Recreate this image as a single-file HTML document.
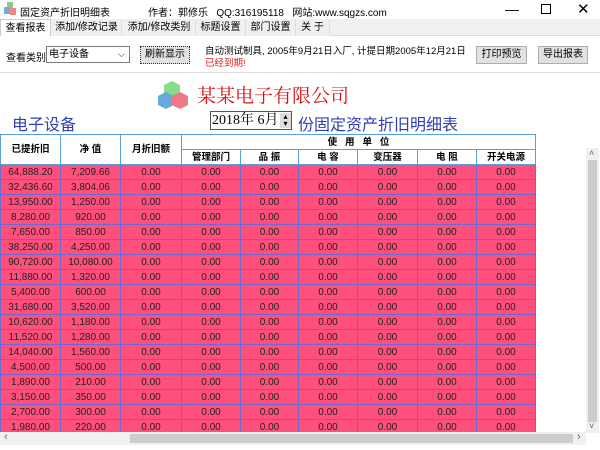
<!DOCTYPE html>
<html><head><meta charset="utf-8"><style>
*{margin:0;padding:0;box-sizing:border-box}
body{width:600px;height:450px;overflow:hidden;background:#fff;font-family:"Liberation Sans","Noto Sans CJK SC",sans-serif;font-size:10px;color:#000;position:relative}
.a{position:absolute;white-space:nowrap}
.tab{position:absolute;top:19px;height:17px;line-height:17px;text-align:center;background:#f0f0f0;border-right:1px solid #ddd;white-space:nowrap;overflow:hidden;font-size:10px}
.btn{position:absolute;height:18px;line-height:16px;text-align:center;background:#e1e1e1;border:1px solid #adadad;font-size:10px}
#grid{position:absolute;left:0;top:134px;width:586px;height:298px;overflow:hidden}
table{border-collapse:collapse;table-layout:fixed;width:535px}
td{border:1px solid #6a6ad0;text-align:center;height:15px;line-height:13px;font-size:10px;padding:0;white-space:nowrap;overflow:hidden}
thead td{background:#fff;border-color:#5aa0d8;font-weight:bold;font-size:9.5px}
tbody td{background:#ff4f7c;color:#222}
</style></head><body>
<svg class="a" style="left:3px;top:2px" width="14" height="14" viewBox="0 0 14 14"><rect x="4" y="0" width="6" height="6" fill="#8c8"/><rect x="1" y="5" width="6" height="7" fill="#7ad"/><rect x="7" y="6" width="6" height="7" fill="#e88"/></svg>
<div class="a" style="left:20px;top:4px">固定资产折旧明细表</div>
<div class="a" style="left:148px;top:4px">作者：郭修乐&nbsp;&nbsp; QQ:316195118&nbsp;&nbsp; 网站:www.sqgzs.com</div>
<div class="a" style="left:505px;top:1px;font-size:14px">—</div>
<div class="a" style="left:541px;top:4px;width:10px;height:10px;border:1px solid #000"></div>
<div class="a" style="left:577px;top:0px;font-size:15px">✕</div>
<div class="a" style="left:0;top:19px;width:600px;height:17px;background:#f0f0f0;border-bottom:1px solid #ddd"></div>
<div class="tab" style="left:0;width:51px;background:#fff;border:1px solid #ccc;border-bottom:none">查看报表</div>
<div class="tab" style="left:52px;width:70px">添加/修改记录</div>
<div class="tab" style="left:123px;width:73px">添加/修改类别</div>
<div class="tab" style="left:196px;width:50px">标题设置</div>
<div class="tab" style="left:246px;width:50px">部门设置</div>
<div class="tab" style="left:296px;width:34px">关 于</div>
<div class="a" style="left:6px;top:49px">查看类别</div>
<div class="a" style="left:46px;top:46px;width:84px;height:17px;border:1px solid #7a7a7a;padding-left:2px;line-height:15px">电子设备<span style="position:absolute;right:4px;font-size:9px">⌵</span></div>
<div class="btn" style="left:140px;top:46px;width:50px;border:1px dotted #333">刷新显示</div>
<div class="a" style="left:205px;top:43px;font-size:9.5px">自动测试制具, 2005年9月21日入厂, 计提日期2005年12月21日</div>
<div class="a" style="left:205px;top:55px;font-size:9.5px;color:#e02020">已经到期!</div>
<div class="btn" style="left:476px;top:46px;width:51px">打印预览</div>
<div class="btn" style="left:538px;top:46px;width:50px">导出报表</div>
<div class="a" style="left:0;top:72px;width:600px;border-top:1px solid #ddd"></div>
<svg class="a" style="left:158px;top:79px" width="32" height="32" viewBox="0 0 32 32"><polygon points="14,2 22,6 22,15 14,19 6,15 6,6" fill="#8d8"/><polygon points="8,13 16,17 16,26 8,30 0,26 0,17" fill="#6ad"/><polygon points="22,13 30,17 30,26 22,30 14,26 14,17" fill="#e78"/></svg>
<div class="a" style="left:197px;top:81px;font-size:19px;color:#e01010;font-family:'Liberation Serif','Noto Serif CJK SC',serif">某某电子有限公司</div>
<div class="a" style="left:12px;top:111px;font-size:16px;color:#3040b0">电子设备</div>
<div class="a" style="left:210px;top:111px;width:82px;height:19px;border:1px solid #555;font-size:14px;line-height:17px;padding-left:1px;font-family:'Liberation Serif','Noto Serif CJK SC',serif">2018年 6月<span style="position:absolute;right:0;top:1px;width:11px;height:15px;background:#ddd;font-size:8px;line-height:7px;text-align:center">▴<br>▾</span></div>
<div class="a" style="left:298px;top:111px;font-size:16px;color:#3040b0">份固定资产折旧明细表</div>
<div id="grid"><table>
<colgroup><col style="width:60px"><col style="width:60px"><col style="width:61px"><col style="width:59px"><col style="width:58px"><col style="width:59px"><col style="width:60px"><col style="width:59px"><col style="width:59px"></colgroup>
<thead><tr><td rowspan="2">已提折旧</td><td rowspan="2">净 值</td><td rowspan="2">月折旧额</td><td colspan="6">使 &nbsp; 用 &nbsp; 单 &nbsp; 位</td></tr>
<tr><td>管理部门</td><td>品 振</td><td>电 容</td><td>变压器</td><td>电 阻</td><td>开关电源</td></tr></thead>
<tbody>
<tr><td>64,888.20</td><td>7,209.66</td><td>0.00</td><td>0.00</td><td>0.00</td><td>0.00</td><td>0.00</td><td>0.00</td><td>0.00</td></tr>
<tr><td>32,436.60</td><td>3,804.06</td><td>0.00</td><td>0.00</td><td>0.00</td><td>0.00</td><td>0.00</td><td>0.00</td><td>0.00</td></tr>
<tr><td>13,950.00</td><td>1,250.00</td><td>0.00</td><td>0.00</td><td>0.00</td><td>0.00</td><td>0.00</td><td>0.00</td><td>0.00</td></tr>
<tr><td>8,280.00</td><td>920.00</td><td>0.00</td><td>0.00</td><td>0.00</td><td>0.00</td><td>0.00</td><td>0.00</td><td>0.00</td></tr>
<tr><td>7,650.00</td><td>850.00</td><td>0.00</td><td>0.00</td><td>0.00</td><td>0.00</td><td>0.00</td><td>0.00</td><td>0.00</td></tr>
<tr><td>38,250.00</td><td>4,250.00</td><td>0.00</td><td>0.00</td><td>0.00</td><td>0.00</td><td>0.00</td><td>0.00</td><td>0.00</td></tr>
<tr><td>90,720.00</td><td>10,080.00</td><td>0.00</td><td>0.00</td><td>0.00</td><td>0.00</td><td>0.00</td><td>0.00</td><td>0.00</td></tr>
<tr><td>11,880.00</td><td>1,320.00</td><td>0.00</td><td>0.00</td><td>0.00</td><td>0.00</td><td>0.00</td><td>0.00</td><td>0.00</td></tr>
<tr><td>5,400.00</td><td>600.00</td><td>0.00</td><td>0.00</td><td>0.00</td><td>0.00</td><td>0.00</td><td>0.00</td><td>0.00</td></tr>
<tr><td>31,680.00</td><td>3,520.00</td><td>0.00</td><td>0.00</td><td>0.00</td><td>0.00</td><td>0.00</td><td>0.00</td><td>0.00</td></tr>
<tr><td>10,620.00</td><td>1,180.00</td><td>0.00</td><td>0.00</td><td>0.00</td><td>0.00</td><td>0.00</td><td>0.00</td><td>0.00</td></tr>
<tr><td>11,520.00</td><td>1,280.00</td><td>0.00</td><td>0.00</td><td>0.00</td><td>0.00</td><td>0.00</td><td>0.00</td><td>0.00</td></tr>
<tr><td>14,040.00</td><td>1,560.00</td><td>0.00</td><td>0.00</td><td>0.00</td><td>0.00</td><td>0.00</td><td>0.00</td><td>0.00</td></tr>
<tr><td>4,500.00</td><td>500.00</td><td>0.00</td><td>0.00</td><td>0.00</td><td>0.00</td><td>0.00</td><td>0.00</td><td>0.00</td></tr>
<tr><td>1,890.00</td><td>210.00</td><td>0.00</td><td>0.00</td><td>0.00</td><td>0.00</td><td>0.00</td><td>0.00</td><td>0.00</td></tr>
<tr><td>3,150.00</td><td>350.00</td><td>0.00</td><td>0.00</td><td>0.00</td><td>0.00</td><td>0.00</td><td>0.00</td><td>0.00</td></tr>
<tr><td>2,700.00</td><td>300.00</td><td>0.00</td><td>0.00</td><td>0.00</td><td>0.00</td><td>0.00</td><td>0.00</td><td>0.00</td></tr>
<tr><td>1,980.00</td><td>220.00</td><td>0.00</td><td>0.00</td><td>0.00</td><td>0.00</td><td>0.00</td><td>0.00</td><td>0.00</td></tr>
</tbody></table></div>
<div class="a" style="left:586px;top:148px;width:13px;height:285px;background:#f0f0f0"></div>
<div class="a" style="left:588px;top:160px;width:9px;height:262px;background:#cdcdcd"></div>
<div class="a" style="left:589px;top:148px;font-size:9px;color:#666">˄</div>
<div class="a" style="left:589px;top:421px;font-size:9px;color:#666">˅</div>
<div class="a" style="left:0;top:432px;width:586px;height:13px;background:#f0f0f0"></div>
<div class="a" style="left:130px;top:434px;width:443px;height:9px;background:#cdcdcd"></div>
<div class="a" style="left:4px;top:431px;font-size:11px;color:#666">‹</div>
<div class="a" style="left:577px;top:431px;font-size:11px;color:#666">›</div>
</body></html>
